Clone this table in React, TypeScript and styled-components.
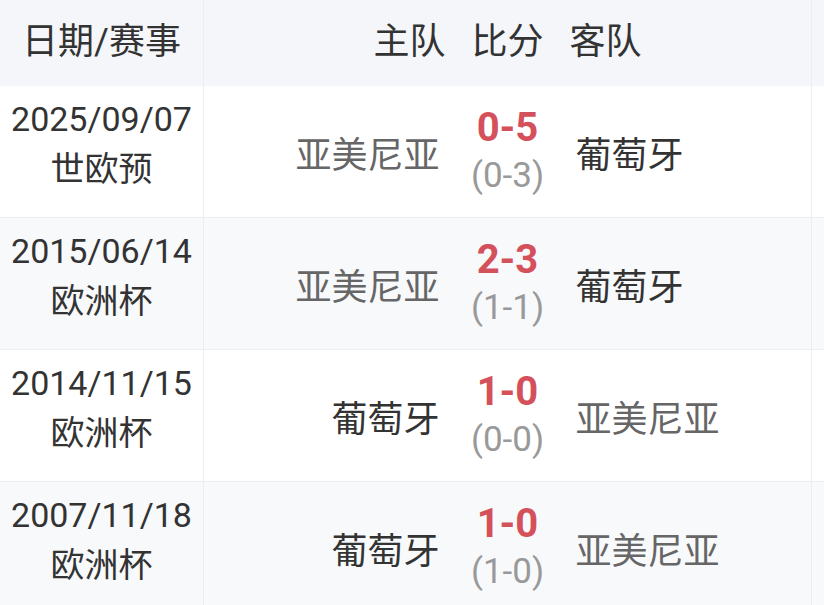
import React from 'react';
import styled, { createGlobalStyle } from 'styled-components';

type Match = {
    date: string;
    league: string;
    home: string;
    away: string;
    score: string;
    half: string;
    homeWin: boolean;
};

const matches: Match[] = [
    { date: '2025/09/07', league: '世欧预', home: '亚美尼亚', away: '葡萄牙', score: '0-5', half: '(0-3)', homeWin: false },
    { date: '2015/06/14', league: '欧洲杯', home: '亚美尼亚', away: '葡萄牙', score: '2-3', half: '(1-1)', homeWin: false },
    { date: '2014/11/15', league: '欧洲杯', home: '葡萄牙', away: '亚美尼亚', score: '1-0', half: '(0-0)', homeWin: true },
    { date: '2007/11/18', league: '欧洲杯', home: '葡萄牙', away: '亚美尼亚', score: '1-0', half: '(1-0)', homeWin: true },
];

const GlobalStyle = createGlobalStyle`
    html, body {
        margin: 0;
        padding: 0;
        background: #ffffff;
        overflow: hidden;
    }
    body {
        font-family: Roboto, "Noto Sans CJK SC", sans-serif;
        color: #333333;
    }
`;

const Table = styled.div`
    width: 920px;
`;

const Row = styled.div<{ $striped?: boolean; $header?: boolean }>`
    display: grid;
    grid-template-columns: 204px 608px 1fr;
    height: ${(p) => (p.$header ? '86px' : '132px')};
    background: ${(p) => (p.$header ? '#f5f6fa' : p.$striped ? '#f8f9fb' : '#ffffff')};
    border-bottom: ${(p) => (p.$header ? 'none' : '1px solid #eceef2')};
    box-sizing: border-box;
`;

const Cell = styled.div<{ $lift: number }>`
    border-right: 1px solid #eceef2;
    display: flex;
    flex-direction: column;
    align-items: center;
    justify-content: center;
    padding-bottom: ${(p) => p.$lift}px;
`;

const HeadText = styled.span`
    font-size: 36px;
    color: #333333;
`;

const DateText = styled.div`
    font-size: 34px;
    line-height: 50px;
    color: #333333;
`;

const LeagueText = styled.div`
    font-size: 34px;
    line-height: 50px;
    color: #333333;
`;

const Teams = styled.div<{ $lift: number }>`
    display: flex;
    align-items: center;
    border-right: 1px solid #eceef2;
    padding-bottom: ${(p) => p.$lift}px;
`;

const Side = styled.div<{ $align: 'left' | 'right' }>`
    flex: 1;
    text-align: ${(p) => p.$align};
`;

const TeamName = styled.span<{ $win: boolean }>`
    font-size: 36px;
    color: ${(p) => (p.$win ? '#333333' : '#666666')};
`;

const ScoreBox = styled.div<{ $width: number }>`
    width: ${(p) => p.$width}px;
    display: flex;
    flex-direction: column;
    align-items: center;
`;

const Score = styled.div`
    font-size: 40px;
    font-weight: 700;
    line-height: 48px;
    color: #d4515b;
`;

const Half = styled.div`
    font-size: 35px;
    line-height: 48px;
    color: #999999;
`;

const Empty = styled.div``;

export default function App() {
    return (
        <>
            <GlobalStyle />
            <Table>
                <Row $header>
                    <Cell $lift={10}>
                        <HeadText>日期/赛事</HeadText>
                    </Cell>
                    <Teams $lift={10}>
                        <Side $align="right">
                            <HeadText>主队</HeadText>
                        </Side>
                        <ScoreBox $width={124}>
                            <HeadText>比分</HeadText>
                        </ScoreBox>
                        <Side $align="left">
                            <HeadText>客队</HeadText>
                        </Side>
                    </Teams>
                    <Empty />
                </Row>
                {matches.map((m, i) => (
                    <Row key={m.date} $striped={i % 2 === 1}>
                        <Cell $lift={16}>
                            <DateText>{m.date}</DateText>
                            <LeagueText>{m.league}</LeagueText>
                        </Cell>
                        <Teams $lift={0}>
                            <Side $align="right">
                                <TeamName $win={m.homeWin}>{m.home}</TeamName>
                            </Side>
                            <ScoreBox $width={136}>
                                <Score>{m.score}</Score>
                                <Half>{m.half}</Half>
                            </ScoreBox>
                            <Side $align="left">
                                <TeamName $win={!m.homeWin}>{m.away}</TeamName>
                            </Side>
                        </Teams>
                        <Empty />
                    </Row>
                ))}
            </Table>
        </>
    );
}
